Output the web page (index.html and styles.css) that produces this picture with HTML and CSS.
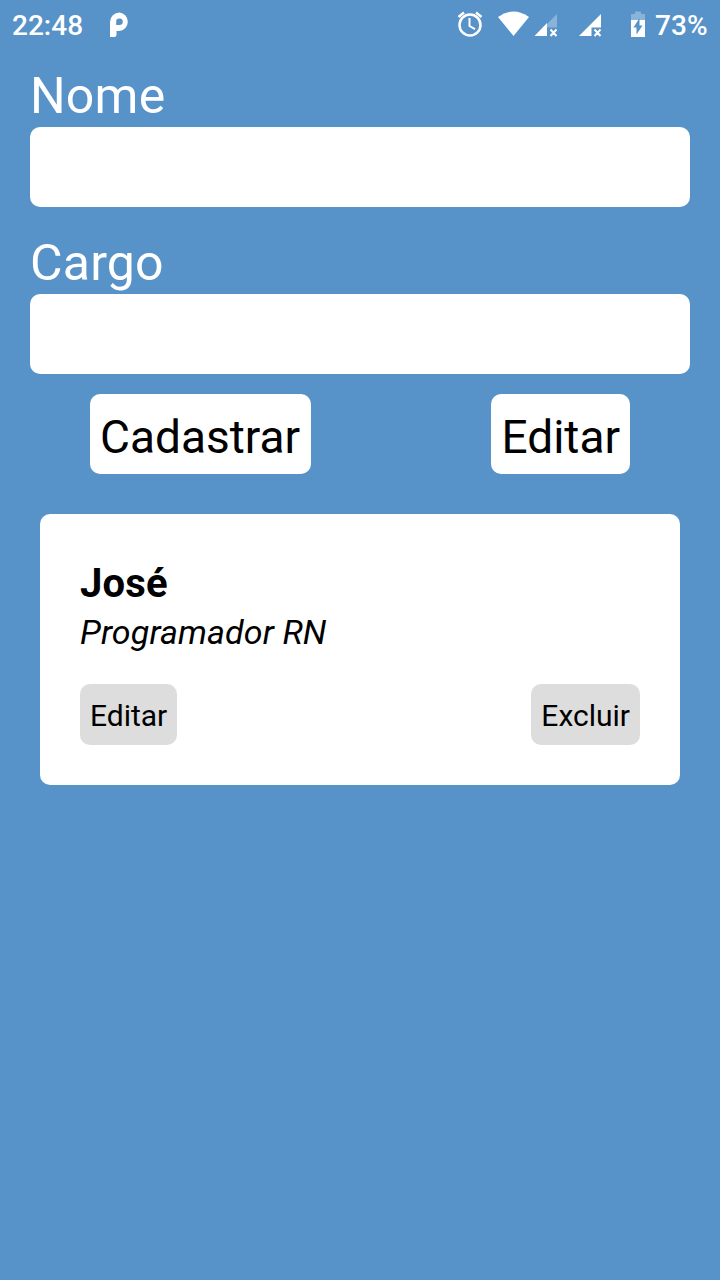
FILE: index.html
```html
<!DOCTYPE html>
<html lang="pt-BR">
<head>
<meta charset="utf-8">
<title>Cadastro</title>
<link rel="stylesheet" href="styles.css">
</head>
<body>
<header class="status">
  <span class="clock">22:48</span>
  <svg class="app-icon" width="22" height="26" viewBox="0 0 22 26"><path fill="#fff" fill-rule="evenodd" d="M10.500 .5A9.300 9.300 0 0 1 10.500 19H7.500V22.500Q7.500 25 5 25H1V10A9.500 9.500 0 0 1 10.500 .5ZM10.500 6.500A3.200 3.200 0 0 0 7.200 9.800V13H10.500A3.200 3.200 0 0 0 10.500 6.500Z"/></svg>
  <svg class="tray" width="200" height="50" viewBox="450 0 200 50">
    <g fill="none" stroke="#fff"><circle cx="470" cy="25" r="10.500" stroke-width="2.500"/><path stroke-width="2.500" d="M458.500 17L464 12.500M481.500 17L476 12.500"/><path stroke-width="2" d="M469.500 18V26L475 29.200"/></g>
    <path fill="#fff" d="M498 17Q513.500 6 529 17L513.500 36Z"/>
    <path fill="#fff" opacity=".3" d="M557 14V27.500H547V24Z"/>
    <path fill="#fff" d="M547 23V36H534.500Z"/>
    <path fill="#fff" d="M601 14V27.500H591.500V36H579Z"/>
    <path stroke="#fff" stroke-width="2" d="M550.500 29.500L556.500 36M556.500 29.500L550.500 36M594.500 29.500L600.500 36M600.500 29.500L594.500 36"/>
    <path fill="#fff" opacity=".3" d="M635 11.500H641V14H645V20H631V14H635Z"/>
    <path fill="#fff" d="M631 20H645V37H631Z"/>
    <path fill="#5792c8" d="M639.500 18V25.500H642.500L636.500 34.500V27.500H633.500Z"/>
  </svg>
  <span class="battery">73%</span>
</header>
<main class="form">
  <label class="label" for="nome">Nome</label>
  <input class="field" id="nome">
  <label class="label second" for="cargo">Cargo</label>
  <input class="field" id="cargo">
  <div class="actions"><button class="action register">Cadastrar</button><button class="action">Editar</button></div>
  <article class="card">
    <div class="name">José</div>
    <div class="role">Programador RN</div>
    <div class="card-actions"><button class="small">Editar</button><button class="small">Excluir</button></div>
  </article>
</main>
</body>
</html>
```
FILE: styles.css
```css
* { box-sizing: border-box; }
body { margin: 0; height: 1280px; background: #5792c8; font-family: Roboto, sans-serif; overflow: hidden; }
.status { height: 50px; display: flex; align-items: center; color: #fff; font-size: 28px; font-weight: 500; padding: 0 12.5px 0 12px; }
.app-icon { margin-left: 26px; margin-top: -1px; }
.tray { margin-left: auto; margin-right: 5.5px; }
.form { padding: 17px 30px 0; }
.label { display: block; height: 60px; line-height: 58px; font-size: 50px; letter-spacing: .2px; color: #fff; }
.second { margin-top: 27px; }
.field { display: block; width: 100%; height: 80px; border: 0; border-radius: 10px; background: #fff; padding: 10px; font: 40px Roboto, sans-serif; }
.actions { display: flex; justify-content: space-between; margin: 20px 60px 40px; }
.action { height: 80px; padding: 6px 10px 0; border: 0; border-radius: 10px; background: #fff; color: #000; font: 46px/54px Roboto, sans-serif; }
.register { width: 221px; text-align: left; }
.card { height: 271px; margin: 0 10px; padding: 46px 40px 40px; border-radius: 10px; background: #fff; color: #000; }
.name { font-size: 40px; line-height: 47px; font-weight: 700; letter-spacing: .15px; }
.role { font-size: 34px; line-height: 50px; font-style: italic; letter-spacing: .1px; }
.card-actions { display: flex; justify-content: space-between; margin-top: 27px; }
.small { height: 61px; padding: 3px 10px 0; border: 0; border-radius: 10px; background: #ddd; color: #000; font: 30px/36px Roboto, sans-serif; }
```
